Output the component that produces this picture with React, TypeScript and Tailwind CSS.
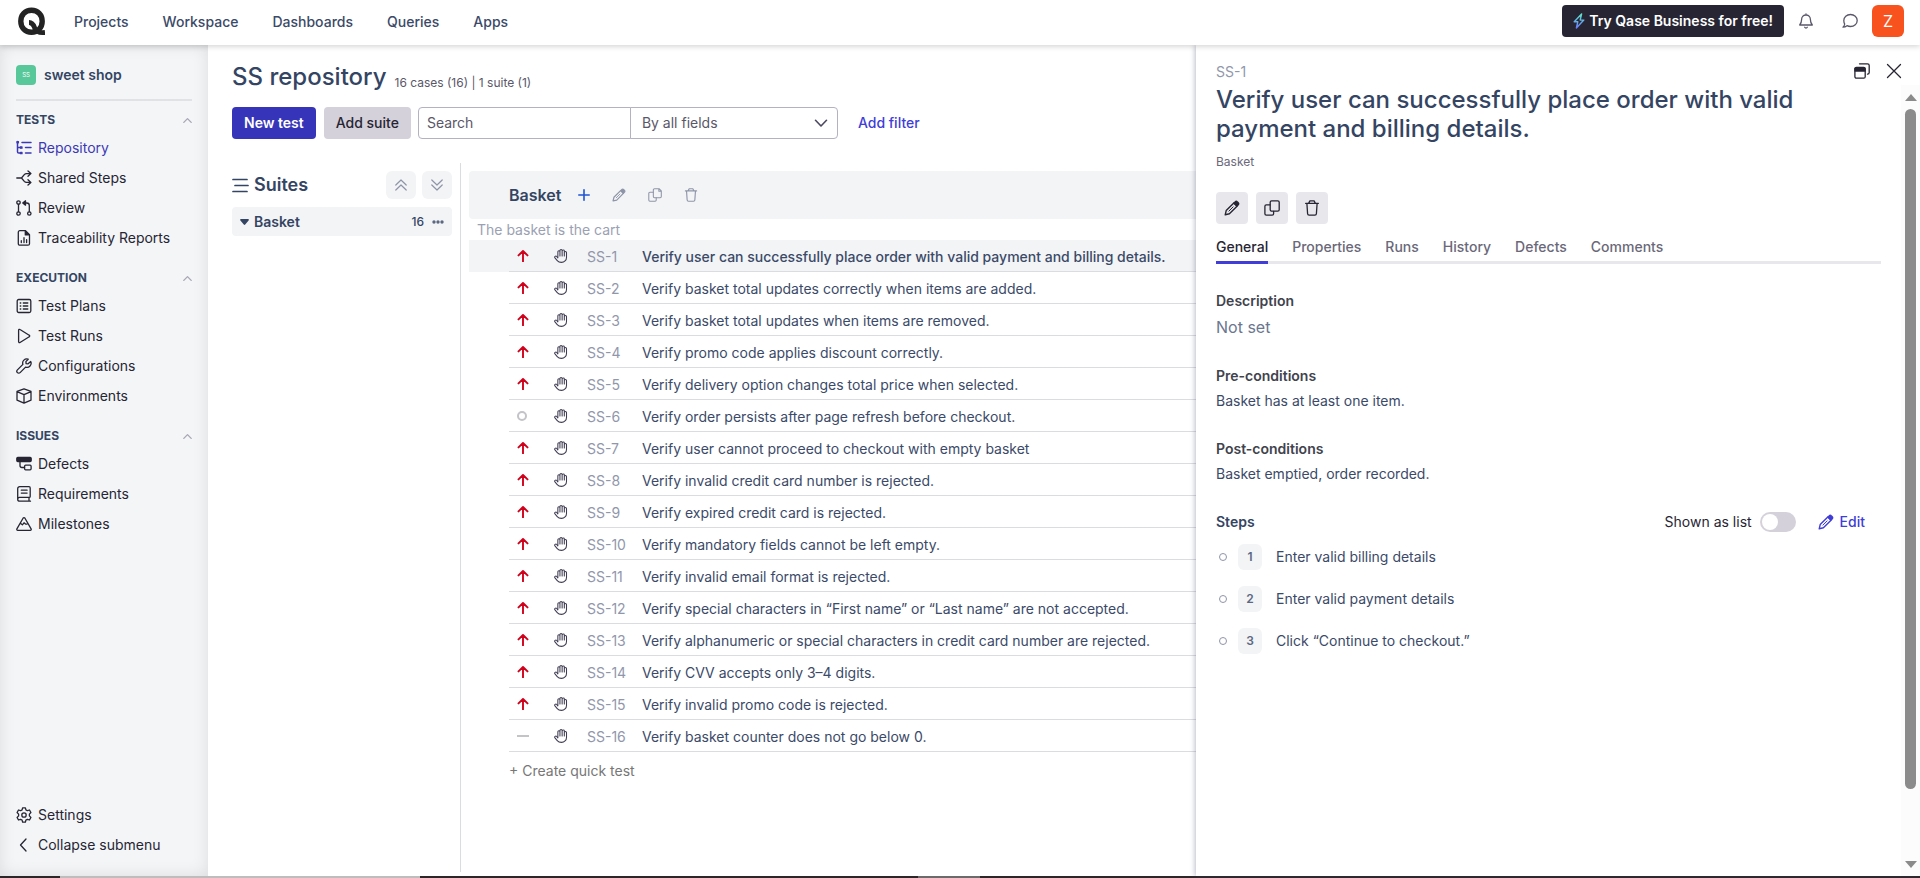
import React from "react";
import type { ReactNode } from "react";

type IconProps = { className?: string };

function Stroke({ className = "size-4", box = "0 0 16 16", width = 1.3, children }: IconProps & { box?: string; width?: number; children: ReactNode }) {
  return (
    <svg viewBox={box} className={"shrink-0 " + className} fill="none" stroke="currentColor" strokeWidth={width} strokeLinecap="round" strokeLinejoin="round" aria-hidden="true">
      {children}
    </svg>
  );
}

const Pencil = ({ className }: IconProps) => (
  <Stroke className={className} width={1.4}>
    <path d="M1.2 14.8l1-4.2 7.6-7.6 3.2 3.2-7.6 7.6z" />
    <path d="M10 3l1.3-1.3a1.3 1.3 0 011.9 0l1.1 1.1a1.3 1.3 0 010 1.9L13 6z" fill="currentColor" />
    <path d="M4.9 11.1l4.2-4.2" strokeWidth="1" />
  </Stroke>
);
const Clone = ({ className }: IconProps) => (
  <Stroke className={className}>
    <rect x="6.2" y="0.8" width="9" height="10.4" rx="1.4" />
    <path d="M6 4.8H2.3A1.4 1.4 0 00.9 6.200v7.500a1.400 1.400 0 001.400 1.400h5.900a1.400 1.400 0 001.400-1.400v-2.400" />
  </Stroke>
);
const Copy = ({ className }: IconProps) => (
  <Stroke className={className} width={1.2}>
    <path d="M7.400.800h5.200l2.600 2.600v6.400a1.300 1.300 0 01-1.300 1.300H7.400a1.300 1.300 0 01-1.300-1.300V2.100A1.300 1.300 0 017.400.800zM12.400 1v2.600H15" />
    <path d="M6 4.800H2.200A1.300 1.300 0 00.900 6.100v7.700a1.300 1.300 0 001.300 1.300h5.900a1.300 1.300 0 001.300-1.300v-2.600" />
  </Stroke>
);
const Trash = ({ className }: IconProps) => (
  <Stroke className={className}>
    <path d="M1.600 3.300h12.800M4.700 3.100l1.200-2.200h4.200l1.200 2.200M2.900 3.500l.7 10.200a1.500 1.500 0 001.500 1.400h5.800a1.500 1.500 0 001.500-1.400l.7-10.200" />
  </Stroke>
);
const Hand = () => (
  <Stroke className="size-[14px] text-[#3f3c52]" width={1.2}>
    <path d="M4.400 9.800V3.200a1.200 1.200 0 012.400 0V8M6.800 8V1.900a1.200 1.200 0 012.500 0V8M9.300 2.300a1.200 1.200 0 012.500 0V8M11.800 4.200a1.200 1.200 0 012.500 0v5.400a5.700 5.700 0 01-5.700 5.700c-2.300 0-3.800-.7-4.900-2L1.100 10.200a1.300 1.300 0 01.2-1.800 1.300 1.300 0 011.800.2l1.300 1.500" />
  </Stroke>
);
const ArrowUp = () => (
  <Stroke className="size-3 text-[#d0021b]" box="0 0 12 12" width={1.9}>
    <path d="M6 11.500V1.200M1.500 5.400L6 1l4.500 4.400" />
  </Stroke>
);
const ChevronUp = () => (
  <Stroke className="w-[9px] h-[9px] text-[#a8a5b5]" box="0 0 9 9">
    <path d="M.800 6.400l3.700-3.800 3.700 3.800" />
  </Stroke>
);

const RepositoryIcon = () => (
  <Stroke>
    <path d="M1.500 1.500v10.300a1.300 1.300 0 001.300 1.300H5M1.500 7.500H5M6 2.500h9M9.500 7.500H15M9.500 13H15" strokeWidth="1.500" />
    <path d="M1 1.600h1.400v1.200H1zM4.500 6.900h1.500v1.300H4.500zM4.500 12.400h1.500v1.300H4.500z" fill="currentColor" />
  </Stroke>
);
const SharedIcon = () => (
  <Stroke>
    <path d="M.800 8h4.700M5.500 8l2.800-3.400a3 3 0 012.200-1H14.500M5.500 8l2.800 3.400a3 3 0 002.200 1H14.500M12 .900l2.900 2.700L12 6.300M12 9.700l2.900 2.700-2.900 2.700" />
  </Stroke>
);
const ReviewIcon = () => (
  <Stroke>
    <circle cx="2.500" cy="2.500" r="1.700" /><circle cx="2.500" cy="13.500" r="1.700" /><circle cx="13.300" cy="13.500" r="1.700" />
    <path d="M2.500 4.300v7.400M13.300 11.700V5.500a2.500 2.500 0 00-2.500-2.500H7.500" /><path d="M9.500.800v4.400L6.800 3z" fill="currentColor" />
  </Stroke>
);
const ReportIcon = () => (
  <Stroke>
    <path d="M3.800.700h5.700l4 4v9a1.500 1.500 0 01-1.500 1.500H3.800a1.500 1.500 0 01-1.500-1.500V2.200A1.500 1.500 0 013.800.700z" />
    <path d="M9.300.900v4h4z" fill="currentColor" /><path d="M5.300 10.700v1.800M8 7.700v4.800M10.600 9.700v2.800" />
  </Stroke>
);
const PlansIcon = () => (
  <Stroke>
    <rect x="1.200" y="1.500" width="13.600" height="13" rx="1.500" />
    <path d="M4.200 5h.6M4.200 8h.6M4.200 11h.6M7.300 5h4.500M7.300 8h4.500M7.300 11h4.500" />
  </Stroke>
);
const PlayIcon = () => (
  <Stroke><path d="M2.600 2.200v11.600a.900.900 0 001.400.700l9.200-5.700a.900.900 0 000-1.600L4 1.500a.900.900 0 00-1.400.700z" /></Stroke>
);
const WrenchIcon = () => (
  <Stroke>
    <path d="M14.700 3.500l-2.600 2.300-2-.2-.2-2L12.200 1.200A4.100 4.100 0 006.900 6.400L1.400 11.900a1.900 1.900 0 002.700 2.700L9.600 9.100a4.100 4.100 0 005.100-5.600z" />
  </Stroke>
);
const BoxIcon = () => (
  <Stroke>
    <path d="M8 .800l7 2.600v8.800l-7 3-7-3V3.400zM1 3.600l7 3 7-3M8 6.600v8.400" />
  </Stroke>
);
const DefectsIcon = () => (
  <Stroke>
    <rect x=".800" y="1.500" width="14.400" height="4" rx="1" fill="currentColor" />
    <path d="M4 6v3.500a2 2 0 002 2h2.500" /><rect x="8.600" y="9.200" width="6.500" height="4.600" rx="1" />
  </Stroke>
);
const BookIcon = () => (
  <Stroke>
    <path d="M14.500 15.200H3.700a2 2 0 01-2-2V2.700a2 2 0 012-2h9.300a1.200 1.200 0 011.200 1.200v8.500a1 1 0 01-1 1H3.500a1.900 1.900 0 00-1.600 1M13 11.500v3.600M5.300 4.200h5.800M5.300 7.100h5.800" />
  </Stroke>
);
const MountainIcon = () => (
  <Stroke>
    <path d="M7.200 2L.900 12.800a1 1 0 00.9 1.500h12.400a1 1 0 00.9-1.500L8.800 2a1 1 0 00-1.600 0zM4.700 7.500l1.700 1.300 1.600-2 1.500 1.300h1.500" />
  </Stroke>
);
const GearIcon = () => (
  <Stroke>
    <path d="M6.600.800h2.800l.5 2.100 1.500.8 2.100-.7 1.400 2.500-1.500 1.600v1.800l1.500 1.600-1.400 2.500-2.100-.7-1.500.8-.5 2.100H6.600l-.5-2.100-1.500-.8-2.100.7-1.400-2.500 1.500-1.600V7.100L1.100 5.500 2.500 3l2.100.7 1.500-.8z" />
    <circle cx="8" cy="8" r="2.200" />
  </Stroke>
);

type Item = { label: string; icon: ReactNode; active?: boolean };
const groups: { title: string; items: Item[] }[] = [
  { title: "TESTS", items: [
    { label: "Repository", icon: <RepositoryIcon />, active: true },
    { label: "Shared Steps", icon: <SharedIcon /> },
    { label: "Review", icon: <ReviewIcon /> },
    { label: "Traceability Reports", icon: <ReportIcon /> },
  ] },
  { title: "EXECUTION", items: [
    { label: "Test Plans", icon: <PlansIcon /> },
    { label: "Test Runs", icon: <PlayIcon /> },
    { label: "Configurations", icon: <WrenchIcon /> },
    { label: "Environments", icon: <BoxIcon /> },
  ] },
  { title: "ISSUES", items: [
    { label: "Defects", icon: <DefectsIcon /> },
    { label: "Requirements", icon: <BookIcon /> },
    { label: "Milestones", icon: <MountainIcon /> },
  ] },
];

const cases = [
  "Verify user can successfully place order with valid payment and billing details.",
  "Verify basket total updates correctly when items are added.",
  "Verify basket total updates when items are removed.",
  "Verify promo code applies discount correctly.",
  "Verify delivery option changes total price when selected.",
  "Verify order persists after page refresh before checkout.",
  "Verify user cannot proceed to checkout with empty basket",
  "Verify invalid credit card number is rejected.",
  "Verify expired credit card is rejected.",
  "Verify mandatory fields cannot be left empty.",
  "Verify invalid email format is rejected.",
  "Verify special characters in “First name” or “Last name” are not accepted.",
  "Verify alphanumeric or special characters in credit card number are rejected.",
  "Verify CVV accepts only 3–4 digits.",
  "Verify invalid promo code is rejected.",
  "Verify basket counter does not go below 0.",
];

function Priority({ n }: { n: number }) {
  if (n === 6) return <span className="block size-[10px] rounded-full border-2 border-[#c3c3c8]" />;
  if (n === 16) return <span className="block h-[2px] w-3 bg-[#c3c3c8]" />;
  return <ArrowUp />;
}

function Header() {
  return (
    <header className="relative z-20 flex h-[45px] shrink-0 items-center bg-white pb-[3px] pl-[17px] pr-4 shadow-[0_1px_6px_rgba(0,0,0,0.2)]">
      <a href="#home" aria-label="Home">
        <svg viewBox="0 0 28 29" className="h-[29px] w-7" fill="none" stroke="#232323" aria-hidden="true">
          <path d="M14.500 3.200c-6.400 0-10.700 4.700-10.700 11s4.300 11 10.700 11 10.700-4.700 10.700-11-4.300-11-10.700-11z" strokeWidth="5.400" />
          <path d="M12 15.500c4.200 0 4.800 3.200 6 6.200 1.300 3.200 4 4.500 10 3.800" strokeWidth="4.800" />
        </svg>
      </a>
      <nav className="ml-[29px] flex gap-[34px] pt-[2px] text-sm font-medium text-[#3b4a68]">
        {["Projects", "Workspace", "Dashboards", "Queries", "Apps"].map((t) => <a key={t} href={"#" + t.toLowerCase()}>{t}</a>)}
      </nav>
      <div className="ml-auto flex items-center">
        <button className="flex h-8 items-center gap-1 rounded bg-[#272533] px-[11px] text-sm font-semibold text-white">
          <svg viewBox="0 0 12 16" className="h-4 w-3" fill="none" stroke="url(#bolt)" strokeWidth="1.400" strokeLinejoin="round" aria-hidden="true">
            <defs><linearGradient id="bolt" x1="0" y1="0" x2="0" y2="1"><stop stopColor="#5ee6c8" /><stop offset="1" stopColor="#6c7bff" /></linearGradient></defs>
            <path d="M8.600.900L1.200 8.800h3.600L3.400 15l7.400-7.900H7.200z" />
          </svg>
          Try Qase Business for free!
        </button>
        <button aria-label="Notifications" className="ml-[14px] text-[#5a5769]">
          <Stroke><path d="M8 .800v1.200M8 2a4.400 4.400 0 00-4.400 4.400c0 2.900-.5 3.700-1.900 5.600h12.600c-1.400-1.900-1.900-2.700-1.900-5.600A4.400 4.400 0 008 2zM6.700 14.300a1.500 1.500 0 002.600 0" /></Stroke>
        </button>
        <button aria-label="Messages" className="ml-7 text-[#5a5769]">
          <Stroke><path d="M8.500 1.500C12.300 1.500 15.200 4 15.200 7.500s-2.900 6-6.700 6c-1.300 0-2.500-.3-3.500-.8-1.100.9-2.400 1.500-4 1.500 1-1 1.600-2.200 1.700-3.200-.6-1-.9-2.200-.9-3.500 0-3.500 2.900-6 6.700-6z" /></Stroke>
        </button>
        <button className="ml-[14px] size-8 rounded-md bg-[#f8531e] text-base text-white">Z</button>
      </div>
    </header>
  );
}

function Sidebar() {
  return (
    <aside className="flex w-[208px] shrink-0 flex-col bg-[#f3f5f7] px-4 pb-4 pt-5 shadow-[inset_0_0_16px_rgba(0,0,0,0.1)]">
      <a href="#project" className="flex h-5 items-center gap-2 text-sm font-semibold text-[#344563]">
        <span className="flex size-5 items-center justify-center rounded bg-[#58c89b] text-[6px] font-normal text-white">SS</span>
        sweet shop
      </a>
      <hr className="mt-[14px] border-t-2 border-[#e0e2e5]" />
      <nav>
        {groups.map((g, i) => (
          <section key={g.title} className={i ? "mt-[15px]" : "mt-[9px]"}>
            <button className="flex h-5 w-full items-center justify-between text-xs font-bold text-[#344563]">{g.title}<ChevronUp /></button>
            <div className="mt-[3px]">
              {g.items.map((it) => (
                <a key={it.label} href={"#" + it.label.toLowerCase()} className={"flex h-[30px] items-center gap-[6px] text-sm " + (it.active ? "text-[#3d38b5]" : "text-[#272533]")}>
                  {it.icon}{it.label}
                </a>
              ))}
            </div>
          </section>
        ))}
      </nav>
      <div className="mt-auto text-sm text-[#272533]">
        <a href="#settings" className="flex h-[30px] items-center gap-[6px]"><GearIcon />Settings</a>
        <button className="flex h-[30px] items-center gap-[6px]"><Stroke><path d="M10 2L4.500 8l5.500 6" /></Stroke>Collapse submenu</button>
      </div>
    </aside>
  );
}

function Suites() {
  return (
    <div className="w-[229px] shrink-0 border-r border-[#dadce0] pr-2 pt-2">
      <div className="flex h-7 items-center gap-[6px]">
        <h2 className="flex grow items-center gap-[5px] text-lg font-semibold text-[#344563]">
          <Stroke className="size-[17px]" box="0 0 17 17" width={1.7}><path d="M1 2.500h14M3 8.500h13M1 14.500h14" /></Stroke>
          Suites
        </h2>
        <button aria-label="Collapse all" className="flex h-7 w-[30px] items-center justify-center rounded-md bg-[#f3f4f6] text-[#8f95a8]">
          <Stroke className="size-3" box="0 0 12 12" width={1.2}><path d="M.800 6L6 1l5.200 5M.800 11L6 6l5.200 5" /></Stroke>
        </button>
        <button aria-label="Expand all" className="flex h-7 w-[30px] items-center justify-center rounded-md bg-[#f3f4f6] text-[#8f95a8]">
          <Stroke className="size-3" box="0 0 12 12" width={1.2}><path d="M.800 1L6 6l5.200-5M.800 6L6 11l5.200-5" /></Stroke>
        </button>
      </div>
      <button className="mt-2 flex h-[29px] w-full items-center rounded bg-[#f3f4f6] px-2 text-sm font-semibold text-[#344563]">
        <svg viewBox="0 0 9 6" className="mr-[5px] h-[6px] w-[9px]" fill="currentColor" aria-hidden="true"><path d="M1 0h7a.8.8 0 01.6 1.400L5.200 5.600a1 1 0 01-1.400 0L.400 1.400A.8.8 0 011 0z" /></svg>
        Basket
        <span className="ml-auto text-xs font-medium">16</span>
        <svg viewBox="0 0 12 4" className="ml-2 h-1 w-3" fill="#5c6882" aria-hidden="true"><circle cx="2" cy="2" r="1.700" /><circle cx="6" cy="2" r="1.700" /><circle cx="10" cy="2" r="1.700" /></svg>
      </button>
    </div>
  );
}

function CaseList() {
  return (
    <div className="min-w-0 grow pl-2 pt-2">
      <div className="flex h-12 items-center rounded-l pl-10 bg-[#f3f4f6] text-[#8f95a8]">
        <h2 className="mr-[17px] text-base font-semibold text-[#344563]">Basket</h2>
        <button aria-label="Add" className="text-[#1f54d6]"><Stroke className="size-3" box="0 0 12 12" width={1.6}><path d="M6 .800v10.400M.800 6h10.400" /></Stroke></button>
        <button aria-label="Edit suite" className="ml-[22px]"><Pencil className="size-[14px]" /></button>
        <button aria-label="Copy suite" className="ml-[22px]"><Copy className="size-[14px]" /></button>
        <button aria-label="Delete suite" className="ml-[22px]"><Trash className="size-[14px]" /></button>
      </div>
      <p className="h-[21px] pl-2 text-sm leading-[22px] text-[#9ba1b3]">The basket is the cart</p>
      <table className="w-full border-separate border-spacing-0 text-sm">
        <tbody>
          {cases.map((text, i) => (
            <tr key={text} className={"h-8 " + (i === 0 ? "bg-[#f3f4f6]" : "")}>
              <td className="w-10 p-0" />
              <td className="w-[39px] border-b border-[#dadce0] p-0 pl-2"><Priority n={i + 1} /></td>
              <td className="w-[39px] border-b border-[#dadce0] p-0 pl-[6px]"><Hand /></td>
              <td className="w-[55px] border-b border-[#dadce0] p-0 pt-[2px] text-[#9197ab]">SS-{i + 1}</td>
              <td className={"whitespace-nowrap border-b border-[#dadce0] p-0 pt-[2px] text-[#3b4a68] " + (i === 0 ? "font-medium" : "")}>{text}</td>
            </tr>
          ))}
        </tbody>
      </table>
      <button className="ml-10 mt-[9px] text-sm text-[#777]">+ Create quick test</button>
    </div>
  );
}

function Main() {
  return (
    <main className="flex min-w-0 grow flex-col pl-6 pt-4">
      <div className="flex items-end gap-2">
        <h1 className="text-2xl font-medium leading-8 text-[#344563]">SS repository</h1>
        <p className="pb-[2px] text-xs text-[#5a5769]">16 cases (16) | 1 suite (1)</p>
      </div>
      <div className="mt-[14px] flex h-8 text-sm">
        <button className="rounded bg-[#3634b8] px-3 font-semibold text-white">New test</button>
        <button className="ml-2 rounded bg-[#d4d1da] px-3 font-medium text-[#272533]">Add suite</button>
        <input aria-label="Search" placeholder="Search" className="ml-[7px] w-[213px] rounded-l border border-[#b4b1c2] px-2 placeholder:text-[#5a5769]" />
        <div className="relative -ml-px w-[208px]">
          <select aria-label="Search field" className="size-full appearance-none rounded-r border border-[#b4b1c2] bg-white px-[11px] text-[#5a5769]"><option>By all fields</option></select>
          <span className="pointer-events-none absolute right-[10px] top-[9px] text-[#4b4860]"><Stroke className="size-[14px]" box="0 0 14 14" width={1.6}><path d="M1.500 4.300L7 10l5.500-5.700" /></Stroke></span>
        </div>
        <button className="ml-5 font-medium text-[#403dd8]">Add filter</button>
      </div>
      <div className="mt-6 flex min-h-0 grow pb-1">
        <Suites />
        <CaseList />
      </div>
    </main>
  );
}

const steps = ["Enter valid billing details", "Enter valid payment details", "Click “Continue to checkout.”"];

function Field({ title, children }: { title: string; children: ReactNode }) {
  return (
    <section className="mb-7">
      <h3 className="text-sm font-semibold text-[#41434d]">{title}</h3>
      <div className="mt-[5px] text-sm text-[#3b4a68]">{children}</div>
    </section>
  );
}

function Detail() {
  return (
    <aside className="relative z-10 flex w-[724px] shrink-0 bg-white shadow-[-1px_0_5px_rgba(60,70,100,0.35)]">
      <div className="min-w-0 grow px-5 pt-[17px]">
        <p className="text-sm text-[#9197ab]">SS-1</p>
        <h2 className="mt-[3px] max-w-[620px] text-2xl font-medium leading-[29px] text-[#344563]">Verify user can successfully place order with valid payment and billing details.</h2>
        <p className="mt-[9px] text-xs leading-5 text-[#6a6879]">Basket</p>
        <div className="mt-5 flex gap-2 text-[#272533]">
          <button aria-label="Edit" className="flex size-8 items-center justify-center rounded bg-[#e8e7ec]"><Pencil /></button>
          <button aria-label="Clone" className="flex size-8 items-center justify-center rounded bg-[#e8e7ec]"><Clone /></button>
          <button aria-label="Delete" className="flex size-8 items-center justify-center rounded bg-[#e8e7ec]"><Trash /></button>
        </div>
        <div role="tablist" className="mt-2 flex h-8 gap-6 border-b-[3px] border-[#e8e7ec] text-sm font-medium text-[#6a6879]">
          {["General", "Properties", "Runs", "History", "Defects", "Comments"].map((t, i) => (
            <button key={t} role="tab" aria-selected={i === 0} className={"-mb-[3px] border-b-[3px] " + (i === 0 ? "border-[#403dd8] text-[#272533]" : "border-transparent")}>{t}</button>
          ))}
        </div>
        <div className="mt-[27px]">
          <Field title="Description"><p className="text-base leading-[22px] text-[#6b7690]">Not set</p></Field>
          <Field title="Pre-conditions">Basket has at least one item.</Field>
          <Field title="Post-conditions">Basket emptied, order recorded.</Field>
        </div>
        <div className="flex items-center text-sm">
          <h3 className="grow font-semibold text-[#344563]">Steps</h3>
          <label className="flex items-center gap-2 text-[#272533]">
            Shown as list
            <input type="checkbox" role="switch" className="h-5 w-9 appearance-none rounded-full bg-[#d4d1da] before:m-[2px] before:block before:size-4 before:rounded-full before:bg-white" />
          </label>
          <button className="ml-[22px] mr-4 flex items-center gap-[6px] font-medium text-[#403dd8]"><Pencil />Edit</button>
        </div>
        <ol className="mt-3 flex flex-col gap-4">
          {steps.map((s, i) => (
            <li key={s} className="flex items-center pl-[3px] text-sm text-[#3b4a68]">
              <span className="size-2 rounded-full border border-[#8f95a8]" />
              <span className="ml-[11px] flex h-[26px] w-6 items-center justify-center rounded-md bg-[#f3f4f6] text-xs font-semibold text-[#5c6882]">{i + 1}</span>
              <span className="ml-[14px]">{s}</span>
            </li>
          ))}
        </ol>
      </div>
      <div className="absolute right-[18px] top-[18px] flex gap-4 text-[#272533]">
        <button aria-label="Open in window"><Stroke className="size-4"><path d="M5.500.800h8a1.700 1.700 0 011.700 1.700v7a1.700 1.700 0 01-1.700 1.700M.900 7V5.800a1.500 1.500 0 011.500-1.500h7.300a1.500 1.500 0 011.500 1.500v7.900a1.500 1.500 0 01-1.500 1.500H2.400a1.500 1.500 0 01-1.500-1.500z" /><path d="M1 5.500h10V8H1z" fill="currentColor" /></Stroke></button>
        <button aria-label="Close"><Stroke className="size-4"><path d="M1.500 1.500l13 13M14.500 1.500l-13 13" /></Stroke></button>
      </div>
      <div className="mt-10 flex w-[19px] shrink-0 flex-col items-center bg-[#fcfcfc] pb-2 pt-[9px]" aria-hidden="true">
        <svg viewBox="0 0 12 7" className="h-[7px] w-3" fill="#8b8b8b"><path d="M6 0l6 7H0z" /></svg>
        <div className="mt-2 w-[11px] grow-[19] rounded-full bg-[#8b8b8b]" />
        <div className="grow-[2]" />
        <svg viewBox="0 0 12 7" className="h-[7px] w-3" fill="#8b8b8b"><path d="M6 7L0 0h12z" /></svg>
      </div>
    </aside>
  );
}

export default function App() {
  return (
    <div className="flex h-screen flex-col overflow-hidden bg-white font-['Inter',sans-serif]">
      <Header />
      <div className="flex min-h-0 grow">
        <Sidebar />
        <Main />
        <Detail />
      </div>
      <div className="flex h-[2px] shrink-0 bg-[#2b2728]"><span className="w-[60px]" /><span className="w-[360px] bg-[#bdbdbd]" /><span className="w-[498px]" /><span className="w-[62px] bg-[#6b6b6b]" /></div>
    </div>
  );
}
